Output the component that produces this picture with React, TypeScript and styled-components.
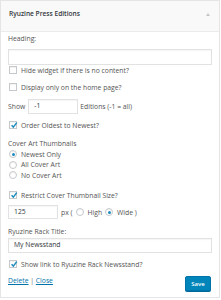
import React from "react";
import styled, { createGlobalStyle } from "styled-components";

const Global = createGlobalStyle`
  html, body { margin: 0; padding: 0; background: #fff; }
  body { font-family: "Open Sans", "Liberation Sans", sans-serif; color: #555; }
  * { box-sizing: border-box; }
`;

const Panel = styled.div`
  width: 220px;
  height: 298px;
  border: 1px solid #e5e5e5;
  background: #fff;
  display: flex;
  flex-direction: column;
`;

const Header = styled.div`
  height: 31px;
  flex: none;
  background: #f9f9f9;
  border-bottom: 1px solid #ebebeb;
  display: flex;
  align-items: flex-start;
  justify-content: space-between;
  padding: 8px 9px 0 8px;
`;

const Title = styled.h3`
  margin: 0;
  font-size: 6.6px;
  line-height: 10px;
  font-weight: 600;
  color: #32373c;
`;

const Arrow = styled.span`
  margin-top: 4px;
  width: 0;
  height: 0;
  border-left: 2.5px solid transparent;
  border-right: 2.5px solid transparent;
  border-bottom: 3px solid #c4c8cc;
`;

const Body = styled.div`
  padding: 2px 7px 0 7px;
  display: flex;
  flex-direction: column;
  font-size: 6.8px;
`;

const Label = styled.div<{ $mt?: number }>`
  height: 10px;
  line-height: 10px;
  margin-top: ${(p) => p.$mt ?? 0}px;
`;

const TextInput = styled.div<{ $w?: number; $h?: number; $mt?: number }>`
  width: ${(p) => (p.$w ? `${p.$w}px` : "100%")};
  height: ${(p) => p.$h ?? 16}px;
  margin-top: ${(p) => p.$mt ?? 0}px;
  border: 1px solid #e2e2e2;
  box-shadow: inset 0 1px 1px rgba(0, 0, 0, 0.04);
  background: #fff;
  color: #32373c;
  padding: 0 5px;
  display: flex;
  align-items: center;
  line-height: 1;
  flex: none;
`;

const Row = styled.div<{ $mt?: number; $h?: number }>`
  display: flex;
  align-items: center;
  height: ${(p) => p.$h ?? 10}px;
  margin-top: ${(p) => p.$mt ?? 0}px;
  white-space: nowrap;
`;

const Box = styled.span`
  width: 8px;
  height: 8px;
  margin-left: 1px;
  margin-right: 4px;
  border: 1px solid #c6c9cc;
  box-shadow: inset 0 1px 1px rgba(0, 0, 0, 0.06);
  background: #fff;
  position: relative;
  flex: none;
`;

const Tick = styled.svg`
  position: absolute;
  left: -1px;
  top: -2px;
`;

const Radio = styled.span<{ $on?: boolean; $ml?: number }>`
  width: 8px;
  height: 8px;
  border-radius: 50%;
  margin-left: ${(p) => p.$ml ?? 1}px;
  margin-right: 4px;
  border: 1px solid #c6c9cc;
  box-shadow: inset 0 1px 1px rgba(0, 0, 0, 0.06);
  background: #fff;
  display: flex;
  align-items: center;
  justify-content: center;
  flex: none;
  &::after {
    content: "";
    display: ${(p) => (p.$on ? "block" : "none")};
    width: 3px;
    height: 3px;
    border-radius: 50%;
    background: #1e8cbe;
  }
`;

const Gap = styled.span<{ $w: number }>`
  display: inline-block;
  width: ${(p) => p.$w}px;
`;

const Footer = styled.div`
  margin-top: 7px;
  height: 15px;
  display: flex;
  justify-content: space-between;
  align-items: flex-start;
`;

const Links = styled.div`
  line-height: 10px;
  color: #666;
`;

const Link = styled.a`
  color: #0073aa;
  text-decoration: underline;
`;

const Save = styled.button`
  width: 26px;
  height: 15px;
  margin-right: 1px;
  padding: 0;
  border: 1px solid #0073aa;
  border-radius: 2px;
  background: #0085ba;
  box-shadow: 0 1px 0 #006799;
  color: #fff;
  font-family: inherit;
  font-size: 6px;
  font-weight: 600;
  line-height: 1;
`;

const Check = ({ on }: { on?: boolean }) => (
  <Box>
    {on && (
      <Tick width="10" height="10" viewBox="0 0 10 10">
        <path d="M2.6 5.3 L4.3 7.1 L7.8 2.6" fill="none" stroke="#1e8cbe" strokeWidth="1.5" />
      </Tick>
    )}
  </Box>
);

export default function App() {
  return (
    <>
      <Global />
      <Panel>
        <Header>
          <Title>Ryuzine Press Editions</Title>
          <Arrow />
        </Header>
        <Body>
          <Label>Heading:</Label>
          <TextInput $mt={5} />
          <Row>
            <Check />
            Hide widget if there is no content?
          </Row>
          <Row $mt={7}>
            <Check />
            Display only on the home page?
          </Row>
          <Row $mt={7} $h={15}>
            Show
            <Gap $w={3} />
            <TextInput $w={50} $h={15}>-1</TextInput>
            <Gap $w={2} />
            Editions (-1 = all)
          </Row>
          <Row $mt={6}>
            <Check on />
            Order Oldest to Newest?
          </Row>
          <Label $mt={9}>Cover Art Thumbnails</Label>
          <Row $h={10.5}>
            <Radio $on />
            Newest Only
          </Row>
          <Row $h={10.5}>
            <Radio />
            All Cover Art
          </Row>
          <Row $h={10.5}>
            <Radio />
            No Cover Art
          </Row>
          <Row $mt={9.5}>
            <Check on />
            Restrict Cover Thumbnail Size?
          </Row>
          <Row $mt={5} $h={14}>
            <TextInput $w={50} $h={14}>125</TextInput>
            <Gap $w={3} />
            px (
            <Radio $ml={3} />
            High
            <Radio $ml={3} $on />
            Wide )
          </Row>
          <Label $mt={8}>Ryuzine Rack Title:</Label>
          <TextInput $mt={1} $h={15}>My Newsstand</TextInput>
          <Row $mt={6}>
            <Check on />
            Show link to Ryuzine Rack Newsstand?
          </Row>
          <Footer>
            <Links>
              <Link>Delete</Link> | <Link>Close</Link>
            </Links>
            <Save>Save</Save>
          </Footer>
        </Body>
      </Panel>
    </>
  );
}
